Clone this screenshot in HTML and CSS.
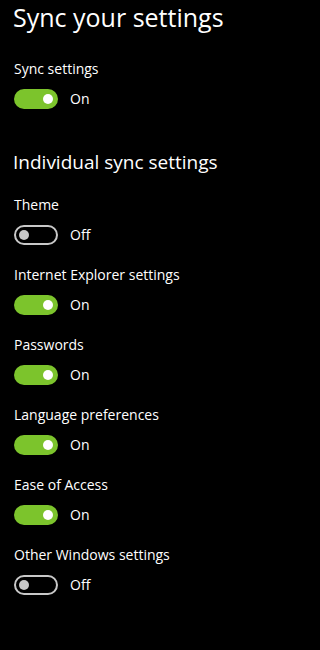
FILE: index.html
```html
<!DOCTYPE html>
<html>
<head>
<meta charset="utf-8">
<link rel="stylesheet" href="styles.css">
</head>
<body>
<div class="page">
  <h1 class="title">Sync your settings</h1>
  <div class="setting first">
    <div class="label">Sync settings</div>
    <div class="toggle-row"><span class="toggle on"><span class="knob"></span></span><span class="state">On</span></div>
  </div>
  <h2 class="heading">Individual sync settings</h2>
  <div class="setting">
    <div class="label">Theme</div>
    <div class="toggle-row"><span class="toggle off"><span class="knob"></span></span><span class="state">Off</span></div>
  </div>
  <div class="setting">
    <div class="label">Internet Explorer settings</div>
    <div class="toggle-row"><span class="toggle on"><span class="knob"></span></span><span class="state">On</span></div>
  </div>
  <div class="setting">
    <div class="label">Passwords</div>
    <div class="toggle-row"><span class="toggle on"><span class="knob"></span></span><span class="state">On</span></div>
  </div>
  <div class="setting">
    <div class="label">Language preferences</div>
    <div class="toggle-row"><span class="toggle on"><span class="knob"></span></span><span class="state">On</span></div>
  </div>
  <div class="setting">
    <div class="label">Ease of Access</div>
    <div class="toggle-row"><span class="toggle on"><span class="knob"></span></span><span class="state">On</span></div>
  </div>
  <div class="setting">
    <div class="label">Other Windows settings</div>
    <div class="toggle-row"><span class="toggle off"><span class="knob"></span></span><span class="state">Off</span></div>
  </div>
</div>
</body>
</html>
```
FILE: styles.css
```css
html, body {
  margin: 0;
  padding: 0;
  background: #000;
}
body {
  color: #fff;
  font-family: "Open Sans", "Noto Sans", sans-serif;
}
.page {
  padding: 1px 0 0 13px;
}
.title {
  margin: 0;
  font-size: 25px;
  line-height: 33px;
  font-weight: 400;
}
.setting {
  display: flex;
  flex-direction: column;
  gap: 10px;
  margin-top: 20px;
}
.setting.first {
  margin-top: 25px;
}
.label {
  font-size: 14px;
  line-height: 20px;
  padding-left: 1px;
}
.toggle-row {
  display: flex;
  align-items: center;
  gap: 12px;
  height: 20px;
  padding-left: 1px;
}
.state {
  font-size: 14px;
  line-height: 20px;
}
.toggle {
  box-sizing: border-box;
  width: 44px;
  height: 20px;
  border-radius: 10px;
  display: flex;
  align-items: center;
}
.toggle.on {
  background: #7cc42c;
  justify-content: flex-end;
  padding-right: 5px;
}
.toggle.off {
  border: 2px solid #c8c8c8;
  padding-left: 3px;
}
.knob {
  width: 10px;
  height: 10px;
  border-radius: 50%;
}
.toggle.on .knob {
  background: #fff;
}
.toggle.off .knob {
  background: #c8c8c8;
}
.heading {
  margin: 39px 0 0 0;
  font-size: 19px;
  line-height: 28px;
  font-weight: 400;
}
.heading + .setting {
  margin-top: 19px;
}
```
